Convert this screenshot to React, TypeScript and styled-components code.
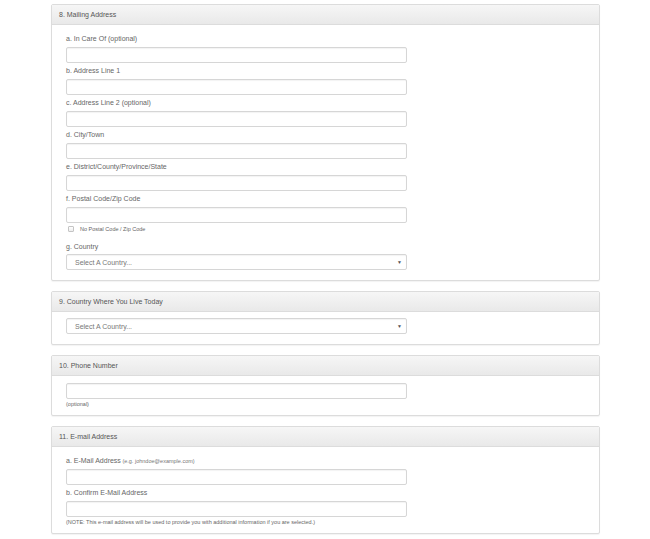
import React from "react";
import styled, { createGlobalStyle } from "styled-components";

const GlobalStyle = createGlobalStyle`
    html, body {
        margin: 0;
        padding: 0;
        background: #fff;
        font-family: "Liberation Sans", Arial, sans-serif;
        color: #666;
    }
    * {
        box-sizing: border-box;
    }
`;

const Page = styled.div`
    padding: 4px 50px 6px 51px;
    display: flex;
    flex-direction: column;
    gap: 10px;
`;

const Panel = styled.section`
    width: 549px;
    border: 1px solid #dcdcdc;
    border-radius: 2px;
    background: #fff;
    box-shadow: 0 1px 1px rgba(0, 0, 0, 0.05);
`;

const PanelHeader = styled.div`
    height: 20px;
    padding: 0 7px;
    display: flex;
    align-items: center;
    font-size: 7px;
    color: #555;
    background: linear-gradient(to bottom, #f6f6f6 0%, #e9e9e9 100%);
    border-bottom: 1px solid #dcdcdc;
`;

const PanelBody = styled.div<{ $top: number; $bottom: number }>`
    padding: ${(p) => p.$top}px 14px ${(p) => p.$bottom}px 14px;
    display: flex;
    flex-direction: column;
`;

const Field = styled.div<{ $gap?: number }>`
    display: flex;
    flex-direction: column;
    margin-bottom: ${(p) => p.$gap ?? 3}px;
`;

const Label = styled.label<{ $space?: number }>`
    font-size: 7px;
    line-height: 10px;
    height: 10px;
    margin-bottom: ${(p) => p.$space ?? 3}px;
    color: #666;
`;

const Hint = styled.span`
    font-size: 5.5px;
    color: #777;
`;

const TextInput = styled.input`
    width: 341px;
    height: 16px;
    border: 1px solid #d6d6d6;
    border-radius: 2px;
    background: #fff;
    box-shadow: inset 0 1px 1px rgba(0, 0, 0, 0.05);
    padding: 0 6px;
    font-size: 7px;
    outline: none;
`;

const SelectBox = styled.div`
    width: 341px;
    height: 16px;
    border: 1px solid #d6d6d6;
    border-radius: 2px;
    background: #fff;
    box-shadow: inset 0 1px 1px rgba(0, 0, 0, 0.05);
    padding: 0 4px 0 8px;
    display: flex;
    align-items: center;
    justify-content: space-between;
    font-size: 7px;
    color: #777;
`;

const Caret = styled.span`
    font-size: 5px;
    color: #555;
`;

const CheckRow = styled.label`
    display: flex;
    align-items: center;
    gap: 6px;
    height: 10px;
    margin: 1px 0 8px 2px;
    font-size: 5.5px;
    color: #666;
`;

const CheckBox = styled.span`
    width: 6px;
    height: 6px;
    border: 1px solid #c4c4c4;
    border-radius: 1px;
    background: linear-gradient(#fff, #eee);
`;

const SmallNote = styled.div<{ $top?: number }>`
    font-size: 5.5px;
    line-height: 7px;
    margin-top: ${(p) => p.$top ?? 2}px;
    color: #666;
`;

const Select = () => (
    <SelectBox>
        <span>Select A Country...</span>
        <Caret>▼</Caret>
    </SelectBox>
);

const TextField = ({ label, hint }: { label: string; hint?: string }) => (
    <Field>
        <Label>
            {label}
            {hint && <Hint> {hint}</Hint>}
        </Label>
        <TextInput type="text" />
    </Field>
);

const App = () => {
    return (
        <>
            <GlobalStyle />
            <Page>
                <Panel>
                    <PanelHeader>8. Mailing Address</PanelHeader>
                    <PanelBody $top={9} $bottom={10}>
                        <TextField label="a. In Care Of (optional)" />
                        <TextField label="b. Address Line 1" />
                        <TextField label="c. Address Line 2 (optional)" />
                        <TextField label="d. City/Town" />
                        <TextField label="e. District/County/Province/State" />
                        <Field $gap={0}>
                            <Label>f. Postal Code/Zip Code</Label>
                            <TextInput type="text" />
                        </Field>
                        <CheckRow>
                            <CheckBox />
                            No Postal Code / Zip Code
                        </CheckRow>
                        <Field $gap={0}>
                            <Label $space={2}>g. Country</Label>
                            <Select />
                        </Field>
                    </PanelBody>
                </Panel>

                <Panel>
                    <PanelHeader>9. Country Where You Live Today</PanelHeader>
                    <PanelBody $top={6} $bottom={10}>
                        <Select />
                    </PanelBody>
                </Panel>

                <Panel>
                    <PanelHeader>10. Phone Number</PanelHeader>
                    <PanelBody $top={7} $bottom={7}>
                        <TextInput type="text" />
                        <SmallNote>(optional)</SmallNote>
                    </PanelBody>
                </Panel>

                <Panel>
                    <PanelHeader>11. E-mail Address</PanelHeader>
                    <PanelBody $top={9} $bottom={7}>
                        <TextField label="a. E-Mail Address" hint="(e.g. johndoe@example.com)" />
                        <Field $gap={0}>
                            <Label>b. Confirm E-Mail Address</Label>
                            <TextInput type="text" />
                        </Field>
                        <SmallNote>
                            (NOTE: This e-mail address will be used to provide you with additional information if you are selected.)
                        </SmallNote>
                    </PanelBody>
                </Panel>
            </Page>
        </>
    );
};

export default App;
